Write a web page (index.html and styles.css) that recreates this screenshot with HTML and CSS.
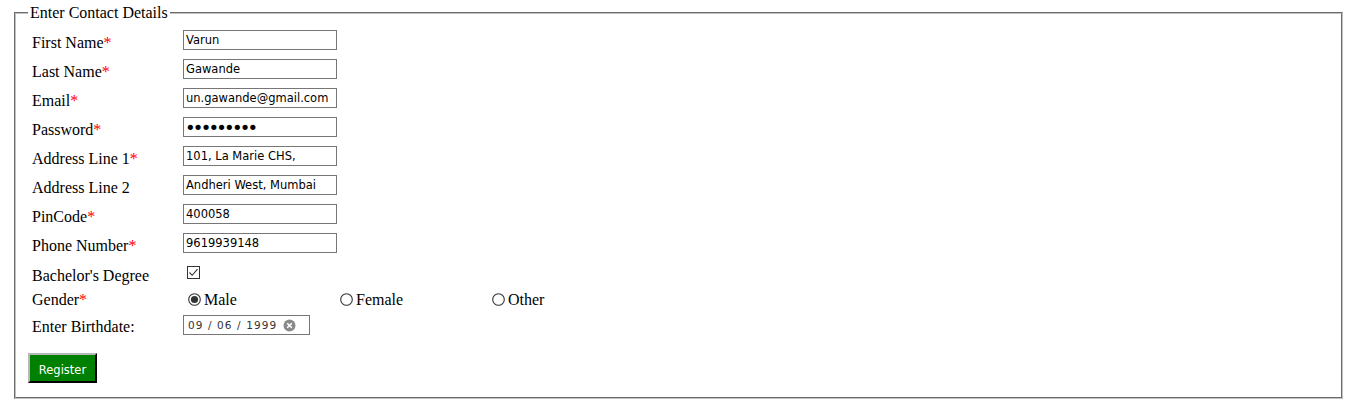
FILE: index.html
```html
<!DOCTYPE html>
<html>
<head>
<meta charset="utf-8">
<title>Contact Details</title>
<link rel="stylesheet" href="styles.css">
</head>
<body>
<form class="page">
  <fieldset class="box">
    <legend class="legend">Enter Contact Details</legend>
    <div class="rows">
      <div class="row text-row">
        <label class="lbl">First Name<span class="req">*</span></label>
        <input class="field" type="text" value="Varun">
      </div>
      <div class="row text-row">
        <label class="lbl">Last Name<span class="req">*</span></label>
        <input class="field" type="text" value="Gawande">
      </div>
      <div class="row text-row">
        <label class="lbl">Email<span class="req">*</span></label>
        <input class="field" type="text" value="un.gawande@gmail.com">
      </div>
      <div class="row text-row">
        <label class="lbl">Password<span class="req">*</span></label>
        <input class="field pw" type="password" value="123456789">
      </div>
      <div class="row text-row">
        <label class="lbl">Address Line 1<span class="req">*</span></label>
        <input class="field" type="text" value="101, La Marie CHS,">
      </div>
      <div class="row text-row">
        <label class="lbl">Address Line 2</label>
        <input class="field" type="text" value="Andheri West, Mumbai">
      </div>
      <div class="row text-row">
        <label class="lbl">PinCode<span class="req">*</span></label>
        <input class="field" type="text" value="400058">
      </div>
      <div class="row text-row">
        <label class="lbl">Phone Number<span class="req">*</span></label>
        <input class="field" type="text" value="9619939148">
      </div>
      <div class="row check-row">
        <label class="lbl">Bachelor's Degree</label>
        <span class="check">
          <svg width="13" height="13" viewBox="0 0 13 13"><rect x="0.5" y="0.5" width="12" height="12" fill="#fff" stroke="#333"/><polyline points="2.5,6.5 5.2,9.3 10.5,3.2" fill="none" stroke="#333" stroke-width="1.1"/></svg>
        </span>
      </div>
      <div class="row gender-row">
        <label class="lbl">Gender<span class="req">*</span></label>
        <span class="opt">
          <svg class="radio" width="13" height="13" viewBox="0 0 13 13"><circle cx="6.5" cy="6.5" r="5.8" fill="#fff" stroke="#333" stroke-width="1.1"/><circle cx="6.5" cy="6.5" r="3.6" fill="#333"/></svg>Male
        </span>
        <span class="opt">
          <svg class="radio" width="13" height="13" viewBox="0 0 13 13"><circle cx="6.5" cy="6.5" r="5.8" fill="#fff" stroke="#333" stroke-width="1.1"/></svg>Female
        </span>
        <span class="opt">
          <svg class="radio" width="13" height="13" viewBox="0 0 13 13"><circle cx="6.5" cy="6.5" r="5.8" fill="#fff" stroke="#333" stroke-width="1.1"/></svg>Other
        </span>
      </div>
      <div class="row date-row">
        <label class="lbl">Enter Birthdate:</label>
        <div class="date">
          <span class="date-text">09 / 06 / 1999</span>
          <svg class="clear" width="13" height="13" viewBox="0 0 13 13"><circle cx="6.5" cy="6.5" r="6" fill="#8a8a8a"/><path d="M4.2 4.2 L8.8 8.8 M8.8 4.2 L4.2 8.8" stroke="#fff" stroke-width="1.6"/></svg>
        </div>
      </div>
      <div class="row btn-row">
        <button class="btn" type="button">Register</button>
      </div>
    </div>
  </fieldset>
</form>
</body>
</html>
```

FILE: styles.css
```css
html, body {
  margin: 0;
  padding: 0;
  background: #fff;
}

body {
  font-family: "Liberation Serif", "Times New Roman", serif;
  font-size: 16px;
  color: #000;
}

.page {
  padding: 4px 23px 0 14px;
}

.box {
  margin: 0;
  border: 2px groove #c0c0c0;
  padding: 3px 12px 14px 12px;
  min-width: 0;
}

.legend {
  padding: 0 2px;
  line-height: 18px;
}

.rows {
  display: flex;
  flex-direction: column;
}

.row {
  display: flex;
  align-items: flex-start;
}

.lbl {
  width: 151px;
  padding-left: 4px;
  flex: 0 0 auto;
  line-height: 18px;
  white-space: nowrap;
}

.req {
  color: #f00;
}

.text-row {
  height: 29px;
}

.text-row .lbl {
  margin-top: 9px;
}

.field {
  margin: 5px 0 0 0;
  box-sizing: border-box;
  width: 154px;
  height: 20px;
  border: 1px solid #767676;
  padding: 1px 2px;
  font-family: "DejaVu Sans", Verdana, sans-serif;
  font-size: 11.5px;
  color: #000;
  background: #fff;
  outline: none;
}

.pw {
  font-size: 18px;
  letter-spacing: -2.8px;
  padding-left: 1px;
}

.check-row {
  height: 24px;
}

.check-row .lbl {
  margin-top: 10px;
}

.check {
  margin: 9px 0 0 4px;
  display: block;
  height: 13px;
}

.check svg {
  display: block;
}

.gender-row {
  height: 27px;
}

.gender-row .lbl {
  margin-top: 10px;
}

.opt {
  width: 152px;
  flex: 0 0 auto;
  display: flex;
  align-items: flex-start;
  margin-top: 10px;
  line-height: 18px;
}

.radio {
  margin: 2px 3px 0 5px;
  flex: 0 0 auto;
}

.date-row {
  height: 30px;
}

.date-row .lbl {
  margin-top: 10px;
}

.date {
  margin-top: 7px;
  box-sizing: border-box;
  width: 127px;
  height: 20px;
  border: 1px solid #767676;
  display: flex;
  align-items: center;
  padding: 0 0 0 4px;
  gap: 6px;
}

.date-text {
  font-family: "DejaVu Sans", Verdana, sans-serif;
  font-size: 10.5px;
  letter-spacing: 1.1px;
  color: #333;
  white-space: pre;
}

.clear {
  display: block;
  flex: 0 0 auto;
}

.btn-row {
  padding-top: 15px;
}

.btn {
  margin: 0;
  width: 69px;
  height: 30px;
  background: #008000;
  color: #fff;
  border: 2px outset #b0b0b0;
  border-color: #b8b8b8 #555 #555 #b8b8b8;
  font-family: "DejaVu Sans", Verdana, sans-serif;
  font-size: 11.5px;
  padding: 3px 0 0 0;
}
```
